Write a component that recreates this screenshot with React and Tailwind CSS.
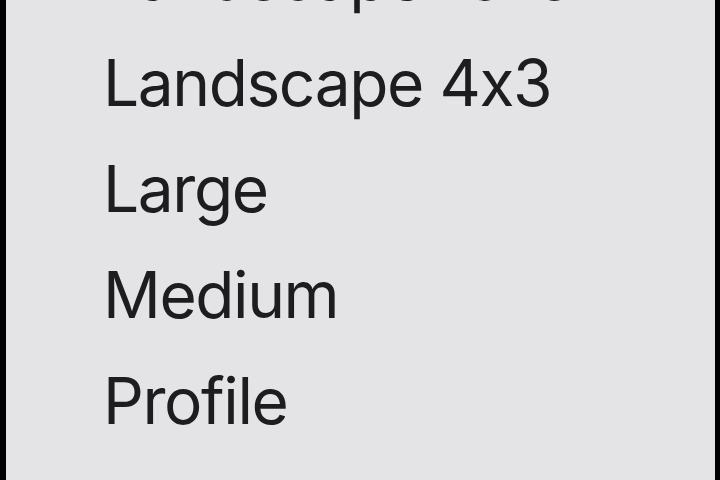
import React from "react";

const items = ["Landscape 16x9", "Landscape 4x3", "Large", "Medium", "Profile"];

export default function App() {
  return (
    <div className="w-[720px] h-[480px] bg-black flex overflow-hidden">
      <div className="ml-[6px] w-[709px] h-full bg-[#e4e4e6] overflow-hidden">
        <ul
          className="-mt-[76px] pl-[97px] flex flex-col text-[#1d1d1f] [font-feature-settings:'calt'_0]"
          style={{ fontFamily: "Inter, 'Noto Sans', sans-serif" }}
        >
          {items.map((item) => (
            <li key={item} className="text-[64px] leading-[106px] tracking-[-0.022em] whitespace-nowrap">
              {item}
            </li>
          ))}
        </ul>
      </div>
    </div>
  );
}
